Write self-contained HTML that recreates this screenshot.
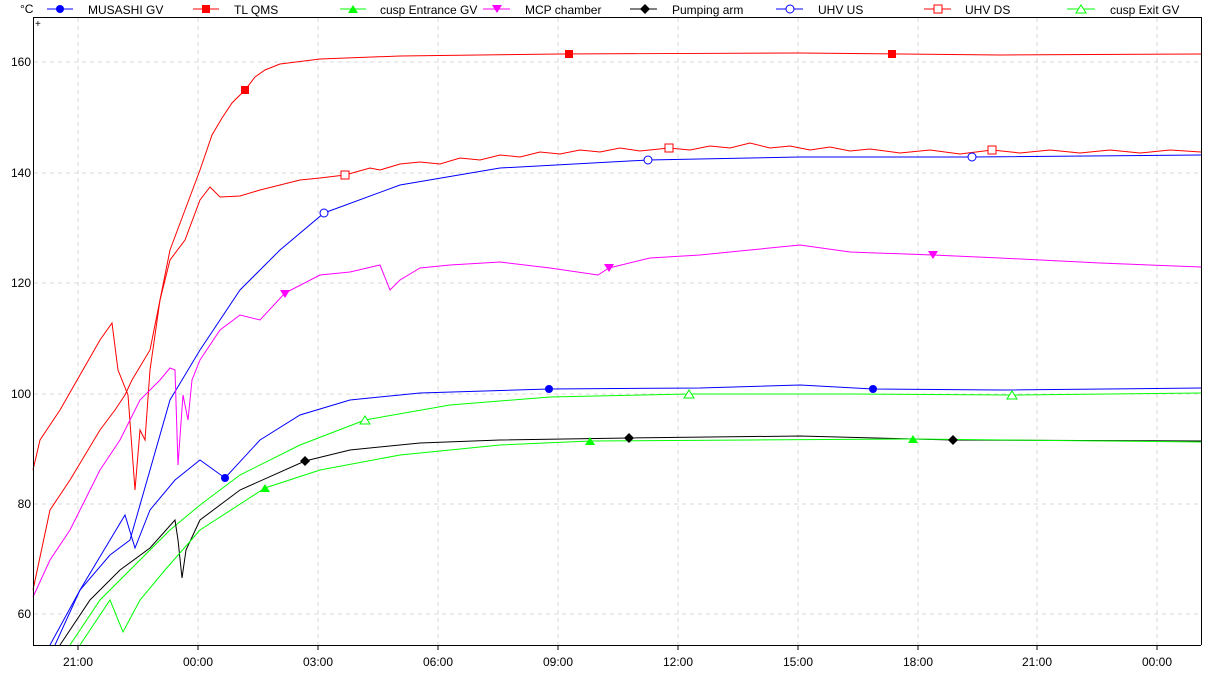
<!DOCTYPE html>
<html><head><meta charset="utf-8"><style>
html,body{margin:0;padding:0;background:#fff;width:1210px;height:677px;overflow:hidden}
svg text{font-family:"Liberation Sans",sans-serif;font-size:12px;fill:#000}
</style></head><body>
<svg width="1210" height="677" viewBox="0 0 1210 677" xmlns="http://www.w3.org/2000/svg">
<g stroke="#d8d8d8" stroke-dasharray="4,4" stroke-width="1">
<line x1="78" y1="18" x2="78" y2="645"/><line x1="198" y1="18" x2="198" y2="645"/><line x1="318" y1="18" x2="318" y2="645"/><line x1="438" y1="18" x2="438" y2="645"/><line x1="558" y1="18" x2="558" y2="645"/><line x1="678" y1="18" x2="678" y2="645"/><line x1="798" y1="18" x2="798" y2="645"/><line x1="918" y1="18" x2="918" y2="645"/><line x1="1037" y1="18" x2="1037" y2="645"/><line x1="1157" y1="18" x2="1157" y2="645"/>
<line x1="34" y1="62" x2="1200" y2="62"/><line x1="34" y1="173" x2="1200" y2="173"/><line x1="34" y1="283" x2="1200" y2="283"/><line x1="34" y1="394" x2="1200" y2="394"/><line x1="34" y1="504" x2="1200" y2="504"/><line x1="34" y1="614" x2="1200" y2="614"/>
</g>
<g fill="none" stroke-width="1">
<polyline stroke="#ff0000" points="33,470 40,440 60,410 80,375 100,340 112,323 118,370 128,395 135,490 140,430 145,440 150,370 160,300 170,250 185,210 200,170 212,135 222,118 232,103 245,90 255,77 265,70 280,64 320,59 400,56 560,54 800,53 1000,55 1201,54"/>
<polyline stroke="#ff0000" points="33,590 50,510 70,480 100,430 115,410 125,395 132,380 150,350 160,300 170,260 185,240 200,200 210,187 220,197 240,196 260,190 280,185 300,180 320,178 345,175 370,168 380,170 400,164 420,162 440,164 460,158 480,160 500,155 520,157 540,152 560,154 580,150 600,152 620,148 640,151 669,148 690,150 710,146 730,148 750,143 770,148 790,146 810,150 830,147 850,151 870,149 900,153 930,150 960,154 992,150 1020,153 1050,150 1080,153 1110,150 1140,153 1170,150 1201,152"/>
<polyline stroke="#0000ff" points="50,645 80,590 110,555 130,540 150,470 170,400 200,350 240,290 280,250 324,213 400,185 500,168 648,160 800,157 972,157 1201,155"/>
<polyline stroke="#ff00ff" points="33,597 50,560 70,530 100,470 120,440 140,400 160,380 170,368 175,370 178,465 183,395 188,420 192,380 200,360 220,330 240,315 260,320 285,293 320,275 350,272 380,265 390,290 400,280 420,268 450,265 500,262 550,268 598,275 609,268 650,258 700,255 750,250 800,245 850,252 933,255 1000,258 1100,263 1201,267"/>
<polyline stroke="#0000ff" points="55,645 80,590 110,540 125,515 135,548 150,510 175,480 200,460 225,478 260,440 300,415 350,400 420,393 549,389 700,388 800,385 873,389 1000,390 1201,388"/>
<polyline stroke="#00ff00" points="70,645 100,600 130,570 170,530 200,505 240,475 300,445 365,420 450,405 550,397 689,394 850,394 1012,395 1201,393"/>
<polyline stroke="#000000" points="60,645 90,600 120,570 150,548 175,520 178,540 182,578 186,550 200,520 240,490 305,461 350,450 420,443 500,440 629,438 800,436 953,440 1201,441"/>
<polyline stroke="#00ff00" points="80,645 110,600 123,632 140,600 165,570 200,530 265,488 320,470 400,455 500,445 590,441 750,440 913,439 1201,442"/>
</g>
<g fill="#ff0000"><rect x="241" y="86" width="8" height="8"/><rect x="565" y="50" width="8" height="8"/><rect x="888" y="50" width="8" height="8"/></g>
<g fill="#fff" stroke="#ff0000"><rect x="341" y="171" width="8" height="8"/><rect x="665" y="144" width="8" height="8"/><rect x="988" y="146" width="8" height="8"/></g>
<g fill="#fff" stroke="#0000ff"><circle cx="324" cy="213" r="4"/><circle cx="648" cy="160" r="4"/><circle cx="972" cy="157" r="4"/></g>
<g fill="#0000ff"><circle cx="225" cy="478" r="4"/><circle cx="549" cy="389" r="4"/><circle cx="873" cy="389" r="4"/></g>
<g fill="#ff00ff"><path d="M280,290h10l-5,8z"/><path d="M604,264h10l-5,8z"/><path d="M928,251h10l-5,8z"/></g>
<g fill="#fff" stroke="#00ff00"><path d="M360,424h10l-5,-8z"/><path d="M684,398h10l-5,-8z"/><path d="M1007,399h10l-5,-8z"/></g>
<g fill="#00ff00"><path d="M260,492h10l-5,-8z"/><path d="M585,445h10l-5,-8z"/><path d="M908,443h10l-5,-8z"/></g>
<g fill="#000"><path d="M305,456l5,5l-5,5l-5,-5z"/><path d="M629,433l5,5l-5,5l-5,-5z"/><path d="M953,435l5,5l-5,5l-5,-5z"/></g>
<line x1="33.5" y1="17" x2="33.5" y2="645" stroke="#000"/>
<line x1="33" y1="645.5" x2="1201" y2="645.5" stroke="#000"/>
<line x1="33" y1="17.5" x2="1201" y2="17.5" stroke="#000"/>
<line x1="1201.5" y1="17" x2="1201.5" y2="645" stroke="#000"/>
<text x="35" y="27" style="font-size:10px">+</text>
<g style="text-anchor:end"><text x="31" y="66">160</text><text x="31" y="177">140</text><text x="31" y="287">120</text><text x="31" y="398">100</text><text x="31" y="508">80</text><text x="31" y="618">60</text></g>
<g stroke="#000"><line x1="78" y1="645" x2="78" y2="650"/><line x1="198" y1="645" x2="198" y2="650"/><line x1="318" y1="645" x2="318" y2="650"/><line x1="438" y1="645" x2="438" y2="650"/><line x1="558" y1="645" x2="558" y2="650"/><line x1="678" y1="645" x2="678" y2="650"/><line x1="798" y1="645" x2="798" y2="650"/><line x1="918" y1="645" x2="918" y2="650"/><line x1="1037" y1="645" x2="1037" y2="650"/><line x1="1157" y1="645" x2="1157" y2="650"/></g>
<g style="text-anchor:middle"><text x="78" y="666">21:00</text><text x="198" y="666">00:00</text><text x="318" y="666">03:00</text><text x="438" y="666">06:00</text><text x="558" y="666">09:00</text><text x="678" y="666">12:00</text><text x="798" y="666">15:00</text><text x="918" y="666">18:00</text><text x="1037" y="666">21:00</text><text x="1157" y="666">00:00</text></g>
<text x="20" y="13">°C</text>
<line x1="47" y1="9" x2="73" y2="9" stroke="#0000ff"/><circle cx="60" cy="9" r="4" fill="#0000ff"/><text x="88" y="14">MUSASHI GV</text>
<line x1="193" y1="9" x2="219" y2="9" stroke="#ff0000"/><rect x="202" y="5" width="8" height="8" fill="#ff0000"/><text x="234" y="14">TL QMS</text>
<line x1="340" y1="9" x2="366" y2="9" stroke="#00ff00"/><path d="M348,13h10l-5,-8z" fill="#00ff00"/><text x="380" y="14">cusp Entrance GV</text>
<line x1="483" y1="9" x2="510" y2="9" stroke="#ff00ff"/><path d="M492,5h10l-5,8z" fill="#ff00ff"/><text x="525" y="14">MCP chamber</text>
<line x1="630" y1="9" x2="657" y2="9" stroke="#000"/><path d="M645,4l5,5l-5,5l-5,-5z" fill="#000"/><text x="672" y="14">Pumping arm</text>
<line x1="776" y1="9" x2="803" y2="9" stroke="#0000ff"/><circle cx="790" cy="9" r="4" fill="#fff" stroke="#0000ff"/><text x="818" y="14">UHV US</text>
<line x1="924" y1="9" x2="951" y2="9" stroke="#ff0000"/><rect x="934" y="5" width="8" height="8" fill="#fff" stroke="#ff0000"/><text x="965" y="14">UHV DS</text>
<line x1="1067" y1="9" x2="1095" y2="9" stroke="#00ff00"/><path d="M1076,13h10l-5,-8z" fill="#fff" stroke="#00ff00"/><text x="1110" y="14">cusp Exit GV</text>
</svg>
</body></html>
